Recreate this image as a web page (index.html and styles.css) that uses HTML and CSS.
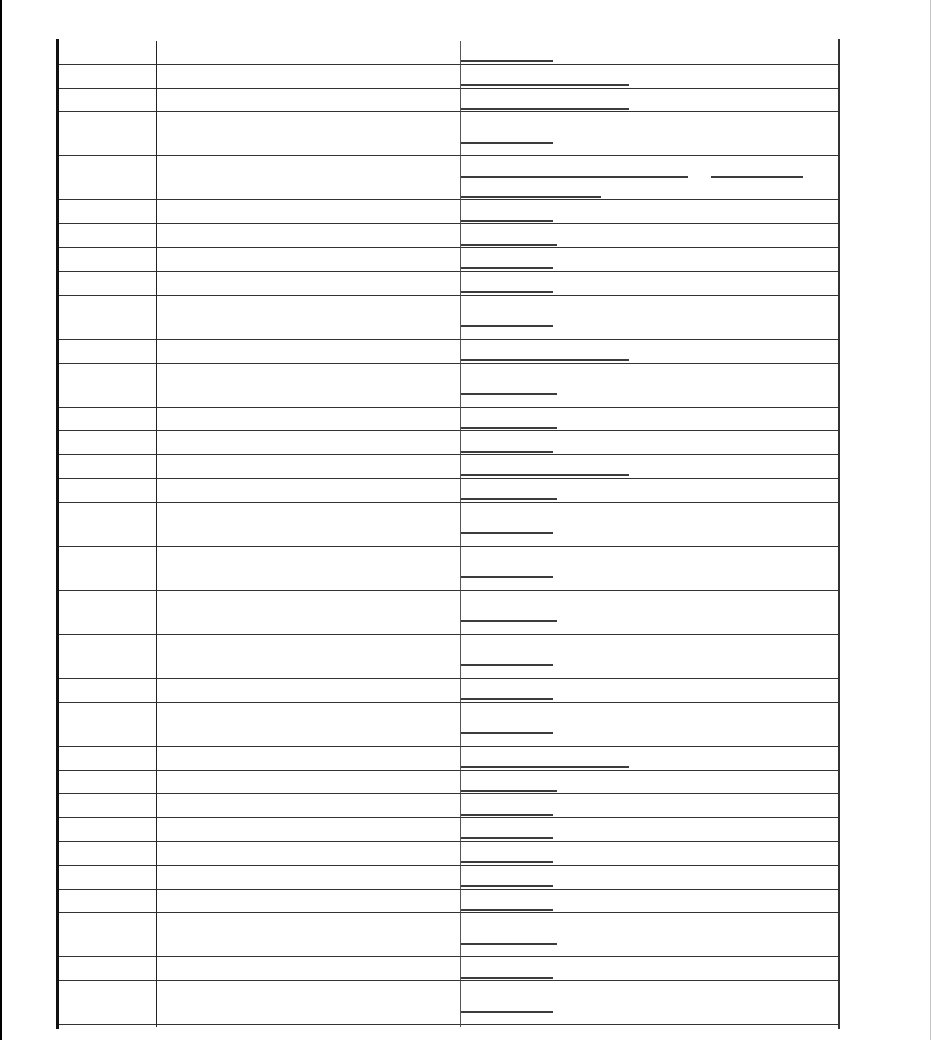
FILE: index.html
```html
<!DOCTYPE html>
<html lang="en">
<head>
<meta charset="utf-8">
<title>Reference table</title>
<link rel="stylesheet" href="styles.css">
</head>
<body>
<div class="frame">
  <div class="sheet">
    <table class="grid">
      <tbody>
        <tr><td class="c1"></td><td class="c2"></td><td class="c3"><a class="ln s" href="#">link</a></td></tr>
        <tr><td class="c1"></td><td class="c2"></td><td class="c3"><a class="ln l" href="#">link</a></td></tr>
        <tr><td class="c1"></td><td class="c2"></td><td class="c3"><a class="ln l" href="#">link</a></td></tr>
        <tr class="tall"><td class="c1"></td><td class="c2"></td><td class="c3"><a class="ln s" href="#">link</a></td></tr>
        <tr class="tall"><td class="c1"></td><td class="c2"></td><td class="c3"><a class="ln w227" href="#">link</a><span class="sep">or</span><a class="ln s" href="#">link</a><br><a class="ln w140" href="#">link</a></td></tr>
        <tr><td class="c1"></td><td class="c2"></td><td class="c3"><a class="ln s" href="#">link</a></td></tr>
        <tr><td class="c1"></td><td class="c2"></td><td class="c3"><a class="ln m" href="#">link</a></td></tr>
        <tr><td class="c1"></td><td class="c2"></td><td class="c3"><a class="ln s" href="#">link</a></td></tr>
        <tr><td class="c1"></td><td class="c2"></td><td class="c3"><a class="ln s" href="#">link</a></td></tr>
        <tr class="tall"><td class="c1"></td><td class="c2"></td><td class="c3"><a class="ln s" href="#">link</a></td></tr>
        <tr><td class="c1"></td><td class="c2"></td><td class="c3"><a class="ln l" href="#">link</a></td></tr>
        <tr class="tall"><td class="c1"></td><td class="c2"></td><td class="c3"><a class="ln m" href="#">link</a></td></tr>
        <tr><td class="c1"></td><td class="c2"></td><td class="c3"><a class="ln m" href="#">link</a></td></tr>
        <tr><td class="c1"></td><td class="c2"></td><td class="c3"><a class="ln s" href="#">link</a></td></tr>
        <tr><td class="c1"></td><td class="c2"></td><td class="c3"><a class="ln l" href="#">link</a></td></tr>
        <tr><td class="c1"></td><td class="c2"></td><td class="c3"><a class="ln m" href="#">link</a></td></tr>
        <tr class="tall"><td class="c1"></td><td class="c2"></td><td class="c3"><a class="ln s" href="#">link</a></td></tr>
        <tr class="tall"><td class="c1"></td><td class="c2"></td><td class="c3"><a class="ln s" href="#">link</a></td></tr>
        <tr class="tall"><td class="c1"></td><td class="c2"></td><td class="c3"><a class="ln m" href="#">link</a></td></tr>
        <tr class="tall"><td class="c1"></td><td class="c2"></td><td class="c3"><a class="ln s" href="#">link</a></td></tr>
        <tr><td class="c1"></td><td class="c2"></td><td class="c3"><a class="ln s" href="#">link</a></td></tr>
        <tr class="tall"><td class="c1"></td><td class="c2"></td><td class="c3"><a class="ln s" href="#">link</a></td></tr>
        <tr><td class="c1"></td><td class="c2"></td><td class="c3"><a class="ln l" href="#">link</a></td></tr>
        <tr><td class="c1"></td><td class="c2"></td><td class="c3"><a class="ln m" href="#">link</a></td></tr>
        <tr><td class="c1"></td><td class="c2"></td><td class="c3"><a class="ln s" href="#">link</a></td></tr>
        <tr><td class="c1"></td><td class="c2"></td><td class="c3"><a class="ln s" href="#">link</a></td></tr>
        <tr><td class="c1"></td><td class="c2"></td><td class="c3"><a class="ln s" href="#">link</a></td></tr>
        <tr><td class="c1"></td><td class="c2"></td><td class="c3"><a class="ln s" href="#">link</a></td></tr>
        <tr><td class="c1"></td><td class="c2"></td><td class="c3"><a class="ln s" href="#">link</a></td></tr>
        <tr class="tall"><td class="c1"></td><td class="c2"></td><td class="c3"><a class="ln m" href="#">link</a></td></tr>
        <tr><td class="c1"></td><td class="c2"></td><td class="c3"><a class="ln s" href="#">link</a></td></tr>
        <tr class="tall"><td class="c1"></td><td class="c2"></td><td class="c3"><a class="ln s" href="#">link</a></td></tr>
        <tr class="tail"><td class="c1"></td><td class="c2"></td><td class="c3"></td></tr>
      </tbody>
    </table>
  </div>
</div>
</body>
</html>
```

FILE: styles.css
```css
html, body {
  margin: 0;
  padding: 0;
  background: #ffffff;
}

body {
  font-family: "Liberation Sans", Arial, sans-serif;
  font-size: 13px;
}

.frame {
  box-sizing: border-box;
  width: 931px;
  height: 1040px;
  overflow: hidden;
  border-left: 2px solid #000000;
  border-right: 1px solid #c4c4c4;
  padding-top: 39px;
}

.sheet {
  width: 779px;
  margin-left: 54px;
  padding: 2px 0 2px;
  border-left: 3px solid #111111;
  border-right: 2px solid #333333;
}

.grid {
  width: 779px;
  table-layout: fixed;
  border-collapse: separate;
  border-spacing: 0;
}

.grid tr {
  height: 23.8px;
}

.grid tr.tall {
  height: 44.05px;
}

.grid tr.tail {
  height: 2px;
}

.grid td {
  box-sizing: border-box;
  padding: 0;
  line-height: 20.25px;
  vertical-align: middle;
  border-bottom: 1px solid #333333;
}

.grid tr.tail td {
  border-bottom: 0;
}

.grid td.c1 {
  width: 98px;
  border-right: 1px solid #222222;
}

.grid td.c2 {
  width: 304px;
  border-right: 1px solid #555555;
}

.grid td.c3 {
  width: 377px;
}

.ln {
  display: inline-block;
  vertical-align: top;
  height: 18px;
  overflow: hidden;
  white-space: nowrap;
  color: #ffffff;
  text-decoration: none;
  border-bottom: 2px solid #3c3c3c;
  font-size: 1px;
  line-height: 18px;
}

.ln.s { width: 92px; }
.ln.m { width: 96px; }
.ln.l { width: 168px; }
.ln.w227 { width: 227px; }
.ln.w140 { width: 140px; }

.sep {
  display: inline-block;
  vertical-align: top;
  width: 23px;
  height: 18px;
  color: #ffffff;
  font-size: 1px;
  overflow: hidden;
}
```
